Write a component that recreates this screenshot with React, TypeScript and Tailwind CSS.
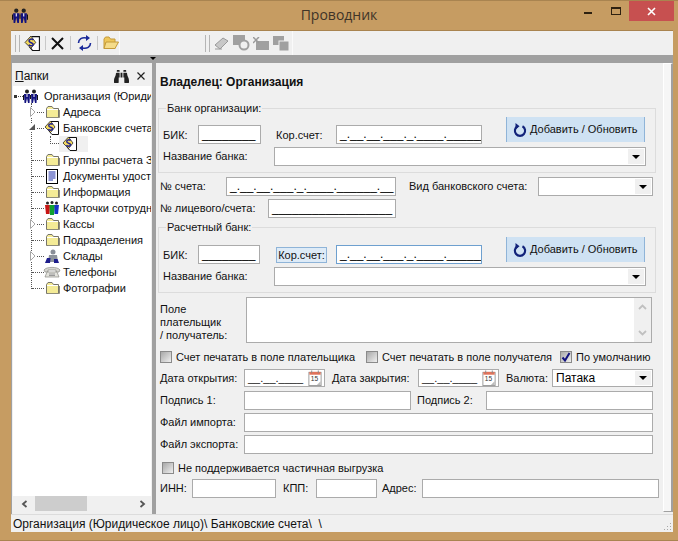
import type { ReactNode } from "react";
import { FaBinoculars } from "react-icons/fa";

function Folder({ gray = false }: { gray?: boolean }) {
  return (
    <svg width="15" height="14" viewBox="0 0 15 14" className="shrink-0">
      <path d="M1.5 3.5 L3 1.5 H7 L8.5 3.5 H13.5 V12.5 H1.5 Z" fill={gray ? "#aaa" : "#f4eb96"} stroke="#77756a" />
      <path d="M2 4.5 H13" stroke="#fff" />
      <path d="M2.5 12.5 H14.5 V5" fill="none" stroke="#8f8d7a" />
    </svg>
  );
}

function DocS({ size = 16 }: { size?: number }) {
  return (
    <svg width={size} height={size} viewBox="0 0 16 16" className="shrink-0">
      <path d="M7 1.5 H14.5 V14.5 H8 L5 11" fill="#fff" stroke="#111" />
      <path d="M6.5 1 L1 7 L6.5 12.5 L11 7 Z" fill="#f2d95c" stroke="#111" strokeWidth="0.7" />
      <path d="M8.6 4.6 C7.4 3.2 4.4 3.8 4.8 5.8 C5.1 7.4 8.4 7 8.6 8.6 C8.8 10.4 5.6 10.6 4.4 9.2" fill="none" stroke="#23238e" strokeWidth="1.5" />
    </svg>
  );
}

function People({ size = 15 }: { size?: number }) {
  return (
    <svg width={size} height={size} viewBox="0 0 15 15" className="shrink-0">
      <circle cx="4" cy="2.5" r="2" fill="#222" />
      <circle cx="11" cy="2.5" r="2" fill="#222" />
      <path d="M1 5 H7 L6.5 14 H5 L4 9 L3 14 H1.5 Z" fill="#12127e" />
      <path d="M8 5 H14 L13.5 14 H12 L11 9 L10 14 H8.5 Z" fill="#12127e" />
      <path d="M3.5 5 H4.5 V8 H3.5 Z M10.5 5 H11.5 V8 H10.5 Z" fill="#fff" />
      <path d="M0.5 6 V11 M14.5 6 V11 M7.5 6 V10" stroke="#111" />
    </svg>
  );
}

function Report() {
  return (
    <svg width="14" height="15" viewBox="0 0 14 15" className="shrink-0">
      <rect x="1.5" y="0.5" width="11" height="14" fill="#fff" stroke="#000" />
      <path d="M3.5 3 H10.5 M3.5 5 H10.5 M3.5 7 H10.5 M3.5 9 H10.5 M3.5 11 H8" stroke="#1a2aa8" />
    </svg>
  );
}

function Cards() {
  return (
    <svg width="16" height="16" viewBox="0 0 16 16" className="shrink-0">
      <circle cx="3.5" cy="3" r="1.5" fill="#222" />
      <circle cx="8" cy="2.5" r="1.5" fill="#222" />
      <circle cx="12.5" cy="3" r="1.5" fill="#222" />
      <path d="M1 5 H6 L5.5 14 H2 Z" fill="#c81414" />
      <path d="M10 5 H15 L14 14 H10.5 Z" fill="#1632c8" />
      <path d="M5.5 5 H10.5 L10 15 H6 Z" fill="#10a030" />
    </svg>
  );
}

function Warehouse() {
  return (
    <svg width="16" height="15" viewBox="0 0 16 15" className="shrink-0">
      <circle cx="9" cy="3" r="2.5" fill="#8a8f98" />
      <path d="M5 6 H13 L14 13 H4 Z" fill="#8f949c" />
      <path d="M1 14 H6 L6.5 9 H3 Z" fill="#1e1e8c" />
      <path d="M10 14 H15 L13.5 10 H10 Z" fill="#1e1e8c" />
    </svg>
  );
}

function Phone() {
  return (
    <svg width="18" height="12" viewBox="0 0 18 12" className="shrink-0">
      <path d="M1 4 C3 0.5 15 0.5 17 4 L16 6 H13 V4 H5 V6 H2 Z" fill="#d6d6d0" stroke="#8a8a84" strokeWidth="0.7" />
      <path d="M4 6 H14 L16 11 H2 Z" fill="#e4e4de" stroke="#8a8a84" strokeWidth="0.7" />
      <path d="M6 8 H12 M6 9.5 H12" stroke="#999" />
    </svg>
  );
}

function Calendar() {
  return (
    <svg width="14" height="16" viewBox="0 0 14 17" className="shrink-0">
      <rect x="0.5" y="2.5" width="13" height="14" fill="#fff" stroke="#9a9a9a" />
      <rect x="1" y="2" width="12" height="3" fill="#e2735a" />
      <path d="M3.5 0.5 V3.5 M10.5 0.5 V3.5" stroke="#888" />
      <text x="2.5" y="12" fontSize="7" fontFamily="Liberation Sans" fill="#333">15</text>
      <path d="M9 16 L13 12 V16 Z" fill="#bbb" />
    </svg>
  );
}

function Refresh() {
  return (
    <svg width="14" height="14" viewBox="0 0 17 17" className="shrink-0">
      <path d="M5.5 4 A6.2 6.2 0 1 0 11.5 4" fill="none" stroke="#12237a" strokeWidth="2.6" />
      <path d="M4 0 V8 L9 4 Z" fill="#12237a" transform="translate(-1 0)" />
    </svg>
  );
}

const TREE = [
  { label: "Адреса", icon: <Folder />, mark: "open" },
  { label: "Банковские счета", icon: <DocS />, mark: "solid" },
  { label: "", icon: null, mark: "child" },
  { label: "Группы расчета Зарплаты", icon: <Folder /> },
  { label: "Документы удостоверяющие", icon: <Report /> },
  { label: "Информация", icon: <Folder /> },
  { label: "Карточки сотрудников", icon: <Cards /> },
  { label: "Кассы", icon: <Folder />, mark: "open" },
  { label: "Подразделения", icon: <Folder /> },
  { label: "Склады", icon: <Warehouse />, mark: "open" },
  { label: "Телефоны", icon: <Phone /> },
  { label: "Фотографии", icon: <Folder /> },
];

function Field({ className, mask, focused }: { className: string; mask?: string; focused?: boolean }) {
  return (
    <div
      className={`${className} h-[19px] shrink-0 border bg-white pl-[3px] pt-[1px] text-[12px] leading-[15px] whitespace-pre overflow-hidden text-black ${
        focused ? "border-[#6ea0cf]" : "border-[#ababab]"
      }`}
    >
      {mask}
    </div>
  );
}

function Combo({ className, value }: { className: string; value?: string }) {
  return (
    <div className={`${className} h-[19px] shrink-0 flex items-stretch justify-between border border-[#ababab] bg-white p-[1px]`}>
      <span className="pl-[2px] text-[12px] leading-[15px] text-black">{value}</span>
      <span className="w-[16px] bg-[#f0f0f0] flex items-center justify-center">
        <span className="w-0 h-0 border-x-[4px] border-x-transparent border-t-[4px] border-t-black" />
      </span>
    </div>
  );
}

function Check({ checked }: { checked?: boolean }) {
  return (
    <span className="w-[12px] h-[12px] shrink-0 border border-[#8a8a8a] bg-gradient-to-br from-[#a8a8a8] to-[#f0f0f0] flex items-center justify-center">
      {checked && (
        <svg width="10" height="10" viewBox="0 0 10 10">
          <path d="M1.5 5.5 L4 8.5 L8.5 1" fill="none" stroke="#12127e" strokeWidth="2" />
        </svg>
      )}
    </span>
  );
}

function AddButton() {
  return (
    <div className="w-[139px] h-[25px] shrink-0 flex items-center gap-[3px] pl-[6px] bg-[#cfe2f3] border-x border-[#8fb4d8]">
      <Refresh />
      <span>Добавить / Обновить</span>
    </div>
  );
}

function BankGroup({
  title,
  rowClass,
  fieldW,
  focused,
  children,
}: {
  title: string;
  rowClass: string;
  fieldW: string;
  focused?: boolean;
  children?: ReactNode;
}) {
  const bik = "________";
  const kor = "_.__.__.___._.____.______";
  return (
    <div className={`relative ml-[2px] w-[498px] border border-[#dcdcdc] pl-[4px] ${rowClass}`}>
      <span className="absolute left-[7px] -top-[8px] bg-[#f0f0f0] px-[1px] leading-[15px]">{title}</span>
      <div className="flex items-start">
        <span className="mt-[11px] w-[35px] leading-[15px]">БИК:</span>
        <div className="mt-[8px]">
          <Field className={fieldW} mask={bik} />
        </div>
        {focused ? (
          <span className="mt-[10px] ml-[16px] w-[51px] h-[16px] border border-[#8fb4d8] bg-[#deebf7] text-center leading-[14px]">Кор.счет:</span>
        ) : (
          <span className="mt-[11px] ml-[15px] w-[51px] text-left leading-[15px]">Кор.счет:</span>
        )}
        <div className="mt-[8px] ml-[9px]">
          <Field className="w-[146px]" mask={kor} focused={focused} />
        </div>
        <div className="ml-[24px]">
          <AddButton />
        </div>
      </div>
      <div className="mt-[3px] flex items-center">
        <span className="w-[111px] leading-[15px]">Название банка:</span>
        <Combo className="w-[372px]" />
      </div>
      {children}
    </div>
  );
}

export default function App() {
  return (
    <div className="w-[678px] h-[541px] flex flex-col bg-[#c69c62] text-[11px] text-[#111] font-['Liberation_Sans',sans-serif] overflow-hidden border-y border-[#a98450]">
      {/* Title bar */}
      <div className="relative h-[29px] shrink-0 flex items-center justify-center pb-[3px] text-[14px] text-[#3f3428] font-['Open_Sans',sans-serif]">
        <span className="absolute left-[12px] top-[7px]">
          <People size={16} />
        </span>
        <span>Проводник</span>
        <div className="absolute right-[4px] top-0 flex items-start">
          <span className="w-[29px] h-[20px] flex items-center justify-center pt-[3px]">
            <span className="w-[8px] h-[2px] bg-[#2e2110]" />
          </span>
          <span className="w-[27px] h-[20px] flex items-center justify-center">
            <span className="w-[10px] h-[8px] border border-[#2e2110] border-t-2" />
          </span>
          <span className="w-[45px] h-[20px] bg-[#c75050] flex items-center justify-center">
            <svg width="9" height="9" viewBox="0 0 9 9">
              <path d="M1 1 L8 8 M8 1 L1 8" stroke="#fff" strokeWidth="1.6" />
            </svg>
          </span>
        </div>
      </div>

      {/* Client area */}
      <div className="ml-[11px] mr-[5px] mb-[8px] flex-1 min-h-0 flex flex-col bg-[#f0f0f0]">
        {/* Toolbars */}
        <div className="h-[25px] shrink-0 flex items-center border-t border-[#a98450] bg-[#f0f0f0]">
          <div className="w-[109px] h-full flex items-center border-r border-[#fafafa] pl-[4px]">
            <span className="w-[5px] h-[17px] border-x border-[#b5b5b5]" />
            <span className="ml-[4px]"><DocS size={17} /></span>
            <span className="ml-[4px] w-px h-[14px] bg-[#c8c8c8]" />
            <svg width="15" height="15" viewBox="0 0 15 15" className="ml-[4px]">
              <path d="M2 2 L13 13 M13 2 L2 13" stroke="#111" strokeWidth="2" />
            </svg>
            <span className="ml-[5px] w-px h-[14px] bg-[#c8c8c8]" />
            <svg width="15" height="16" viewBox="0 0 15 16" className="ml-[6px]">
              <path d="M1.5 8 C1.5 4 5 2 9.5 3 M13.5 8 C13.5 12 10 14 5.5 13" fill="none" stroke="#1a2a9a" strokeWidth="1.6" />
              <path d="M9 0 L13 3 L9 6 Z M6 10 L2 13 L6 16 Z" fill="#1a2a9a" />
            </svg>
            <span className="ml-[5px] w-px h-[14px] bg-[#c8c8c8]" />
            <span className="ml-[5px]">
              <svg width="16" height="14" viewBox="0 0 16 14">
                <path d="M1 3 L2.5 1 H6 L7.5 3 H12 V12.5 H1 Z" fill="#eec75a" stroke="#c49a3a" />
                <path d="M3 6 H15.5 L12 12.5 H1 Z" fill="#f5dc8a" stroke="#c49a3a" />
              </svg>
            </span>
          </div>
          <div className="ml-[83px] w-[90px] h-full flex items-center border-r border-[#fafafa] pl-[2px]">
            <span className="w-[5px] h-[17px] border-x border-[#b5b5b5]" />
            <svg width="15" height="13" viewBox="0 0 15 13" className="ml-[4px]">
              <path d="M1 8 L9 1 L14 4 L6 12 Z" fill="#c8c8c8" stroke="#9a9a9a" />
              <path d="M1 12 H8" stroke="#9a9a9a" />
            </svg>
            <svg width="17" height="16" viewBox="0 0 17 16" className="ml-[4px]">
              <rect x="0" y="0" width="12" height="10" fill="#a0a0a0" />
              <circle cx="11" cy="10" r="4.5" fill="#f0f0f0" stroke="#a0a0a0" strokeWidth="2" />
            </svg>
            <svg width="16" height="13" viewBox="0 0 16 13" className="ml-[3px]">
              <rect x="3" y="4" width="13" height="9" fill="#a0a0a0" />
              <path d="M0 0 L6 6 M6 0 L0 6" stroke="#9a9a9a" strokeWidth="1.5" />
            </svg>
            <svg width="17" height="15" viewBox="0 0 17 15" className="ml-[4px]">
              <rect x="0" y="0" width="11" height="9" fill="#a0a0a0" />
              <rect x="6" y="5" width="10" height="10" fill="#a0a0a0" stroke="#f0f0f0" />
            </svg>
          </div>
        </div>
        <div className="relative h-[8px] shrink-0 bg-[#a0a0a0]">
          <span className="absolute left-[139px] top-[2px] w-0 h-0 border-x-[3px] border-x-transparent border-t-[3px] border-t-black" />
        </div>

        {/* Main */}
        <div className="flex-1 min-h-0 flex">
          {/* Left panel */}
          <div className="w-[141px] shrink-0 flex flex-col pl-[1px] pb-[3px] border-l border-[#a0a0a0]">
            <div className="h-[23px] shrink-0 flex items-center justify-between px-[2px] pt-[3px]">
              <span className="text-[12px]"><u>П</u>апки</span>
              <div className="flex items-center gap-[8px] pr-[5px]">
                <FaBinoculars size={15} color="#222" />
                <svg width="8" height="8" viewBox="0 0 8 8">
                  <path d="M0.5 0.5 L7.5 7.5 M7.5 0.5 L0.5 7.5" stroke="#222" strokeWidth="1.2" />
                </svg>
              </div>
            </div>
            <div className="relative flex-1 min-h-0 w-[138px] flex flex-col bg-white overflow-hidden">
              {/* Tree connector line */}
              <span className="absolute left-[18px] top-[17px] h-[186px] border-l border-dotted border-[#555]" />
              <div className="flex-1 pt-[2px]">
                <div className="h-[16px] flex items-center relative whitespace-nowrap">
                  <span className="ml-[1px] w-[3px] h-[3px] bg-[#333] shrink-0" />
                  <span className="ml-[1px] w-[5px] border-t border-dotted border-[#555] shrink-0" />
                  <span className="shrink-0"><People /></span>
                  <span className="ml-[6px] shrink-0">Организация (Юридическое лицо)</span>
                </div>
                {TREE.map((row) =>
                  row.mark === "child" ? (
                    <div key="child" className="h-[16px] flex items-center">
                      <span className="ml-[37px] w-[9px] h-[8px] -mt-[8px] border-l border-b border-dotted border-[#555] shrink-0" />
                      <span className="w-[29px] h-[16px] bg-[#f0f0f0] flex items-center pl-[3px] shrink-0"><DocS /></span>
                    </div>
                  ) : (
                    <div key={row.label} className="relative h-[16px] flex items-center whitespace-nowrap">
                      <span className="ml-[19px] w-[12px] border-t border-dotted border-[#555] shrink-0" />
                      {row.mark === "open" && (
                        <span className="absolute left-[17px] top-[3px] w-[6px] h-[10px] bg-white">
                          <svg width="6" height="10" viewBox="0 0 6 10">
                            <path d="M0.5 0.5 L5 5 L0.5 9.5 Z" fill="#fff" stroke="#a6a6a6" />
                          </svg>
                        </span>
                      )}
                      {row.mark === "solid" && (
                        <span className="absolute left-[16px] top-[3px] bg-white">
                          <svg width="7" height="9" viewBox="0 0 7 9">
                            <path d="M0 7 L6 1 V7 Z" fill="#555" />
                          </svg>
                        </span>
                      )}
                      <span className="w-[16px] flex justify-center shrink-0">{row.icon}</span>
                      <span className="ml-[3px] text-[#111] shrink-0">{row.label}</span>
                    </div>
                  )
                )}
              </div>
              {/* Horizontal scrollbar */}
              <div className="h-[15px] shrink-0 flex items-center bg-[#f0f0f0]">
                <span className="w-[22px] flex justify-center">
                  <svg width="7" height="8" viewBox="0 0 7 8"><path d="M5.5 1 L2 4 L5.5 7" fill="none" stroke="#555" strokeWidth="1.8" /></svg>
                </span>
                <span className="w-[52px] h-full bg-[#cdcdcd]" />
                <span className="flex-1" />
                <span className="w-[18px] flex justify-center">
                  <svg width="7" height="8" viewBox="0 0 7 8"><path d="M1.5 1 L5 4 L1.5 7" fill="none" stroke="#555" strokeWidth="1.8" /></svg>
                </span>
              </div>
            </div>
          </div>

          {/* Splitter */}
          <div className="w-[4px] shrink-0 bg-[#a0a0a0]" />

          {/* Form */}
          <div className="flex-1 min-w-0 flex flex-col pt-[12px] leading-[15px] whitespace-nowrap">
            <div className="ml-[4px] h-[14px] font-bold text-[12px] leading-[14px]">Владелец: Организация</div>

            <div className="mt-[19px]">
              <BankGroup title="Банк организации:" rowClass="pt-[8px] pb-[6px]" fieldW="w-[63px]" />
            </div>

            <div className="mt-[4px] flex items-center pl-[4px]">
              <span className="w-[66px]">№ счета:</span>
              <Field className="w-[170px]" mask="_.__.__.___._.____.______.__" />
              <span className="ml-[13px] w-[129px]">Вид банковского счета:</span>
              <Combo className="w-[115px]" />
            </div>
            <div className="mt-[3px] flex items-center pl-[4px]">
              <span className="w-[108px]">№ лицевого/счета:</span>
              <Field className="w-[128px]" mask="__________________" />
            </div>

            <div className="mt-[9px]">
              <BankGroup title="Расчетный банк:" rowClass="pt-[9px] pb-[6px]" fieldW="w-[62px]" focused />
            </div>

            <div className="mt-[4px] flex items-start pl-[4px]">
              <div className="w-[86px] mt-[6px] leading-[13px]">
                Поле<br />плательщик<br />/ получатель:
              </div>
              <div className="w-[406px] h-[46px] flex justify-end border border-[#ababab] bg-white">
                <div className="w-[17px] h-full bg-[#f0f0f0] flex flex-col items-center justify-between py-[6px]">
                  <svg width="9" height="6" viewBox="0 0 9 6"><path d="M1 5 L4.5 1.5 L8 5" fill="none" stroke="#c0c0c0" strokeWidth="1.8" /></svg>
                  <svg width="9" height="6" viewBox="0 0 9 6"><path d="M1 1 L4.5 4.5 L8 1" fill="none" stroke="#c0c0c0" strokeWidth="1.8" /></svg>
                </div>
              </div>
            </div>

            <div className="mt-[8px] h-[12px] flex items-center pl-[4px]">
              <Check />
              <span className="ml-[4px] w-[190px]">Счет печатать в поле плательщика</span>
              <Check />
              <span className="ml-[4px] w-[178px]">Счет печатать в поле получателя</span>
              <Check checked />
              <span className="ml-[4px]">По умолчанию</span>
            </div>

            <div className="mt-[6px] flex items-center pl-[4px]">
              <span className="w-[84px]">Дата открытия:</span>
              <div className="w-[81px] h-[18px] flex items-center justify-between border border-[#ababab] bg-white pl-[3px] pr-[2px]">
                <span>__.__.____</span>
                <Calendar />
              </div>
              <span className="ml-[7px] w-[86px]">Дата закрытия:</span>
              <div className="w-[81px] h-[18px] flex items-center justify-between border border-[#ababab] bg-white pl-[3px] pr-[2px]">
                <span>__.__.____</span>
                <Calendar />
              </div>
              <span className="ml-[7px] w-[46px]">Валюта:</span>
              <Combo className="w-[101px] !h-[18px]" value="Патака" />
            </div>

            <div className="mt-[4px] flex items-center pl-[4px]">
              <span className="w-[84px]">Подпись 1:</span>
              <Field className="w-[167px]" />
              <span className="ml-[6px] w-[69px]">Подпись 2:</span>
              <Field className="w-[167px]" />
            </div>
            <div className="mt-[3px] flex items-center pl-[4px]">
              <span className="w-[84px]">Файл импорта:</span>
              <Field className="w-[409px]" />
            </div>
            <div className="mt-[3px] flex items-center pl-[4px]">
              <span className="w-[84px]">Файл экспорта:</span>
              <Field className="w-[409px]" />
            </div>

            <div className="mt-[8px] h-[12px] flex items-center pl-[6px]">
              <Check />
              <span className="ml-[4px]">Не поддерживается частичная выгрузка</span>
            </div>

            <div className="mt-[5px] flex items-center pl-[4px]">
              <span className="w-[32px]">ИНН:</span>
              <Field className="w-[84px]" />
              <span className="ml-[7px] w-[33px]">КПП:</span>
              <Field className="w-[61px]" />
              <span className="ml-[5px] w-[40px]">Адрес:</span>
              <Field className="w-[237px]" />
            </div>
          </div>

          {/* Right edge bar */}
          <div className="w-[10px] shrink-0 mb-[2px] bg-[#f6f6f6] border-l border-t border-white border-r-2 border-r-[#a0a0a0] border-b border-b-[#a0a0a0]" />
        </div>

        {/* Status bar */}
        <div className="relative h-[18px] shrink-0 flex items-center pl-[2px] border-t border-[#dcdcdc] bg-[#f0f0f0] text-[12px] whitespace-pre">
          <span>Организация (Юридическое лицо)\ Банковские счета\  \</span>
          <svg width="10" height="10" viewBox="0 0 10 10" className="absolute right-[1px] bottom-[1px]">
            <path d="M8 2 H9 V3 H8 Z M8 5 H9 V6 H8 Z M5 5 H6 V6 H5 Z M8 8 H9 V9 H8 Z M5 8 H6 V9 H5 Z M2 8 H3 V9 H2 Z" fill="#a8a8a8" />
          </svg>
        </div>
      </div>
    </div>
  );
}
